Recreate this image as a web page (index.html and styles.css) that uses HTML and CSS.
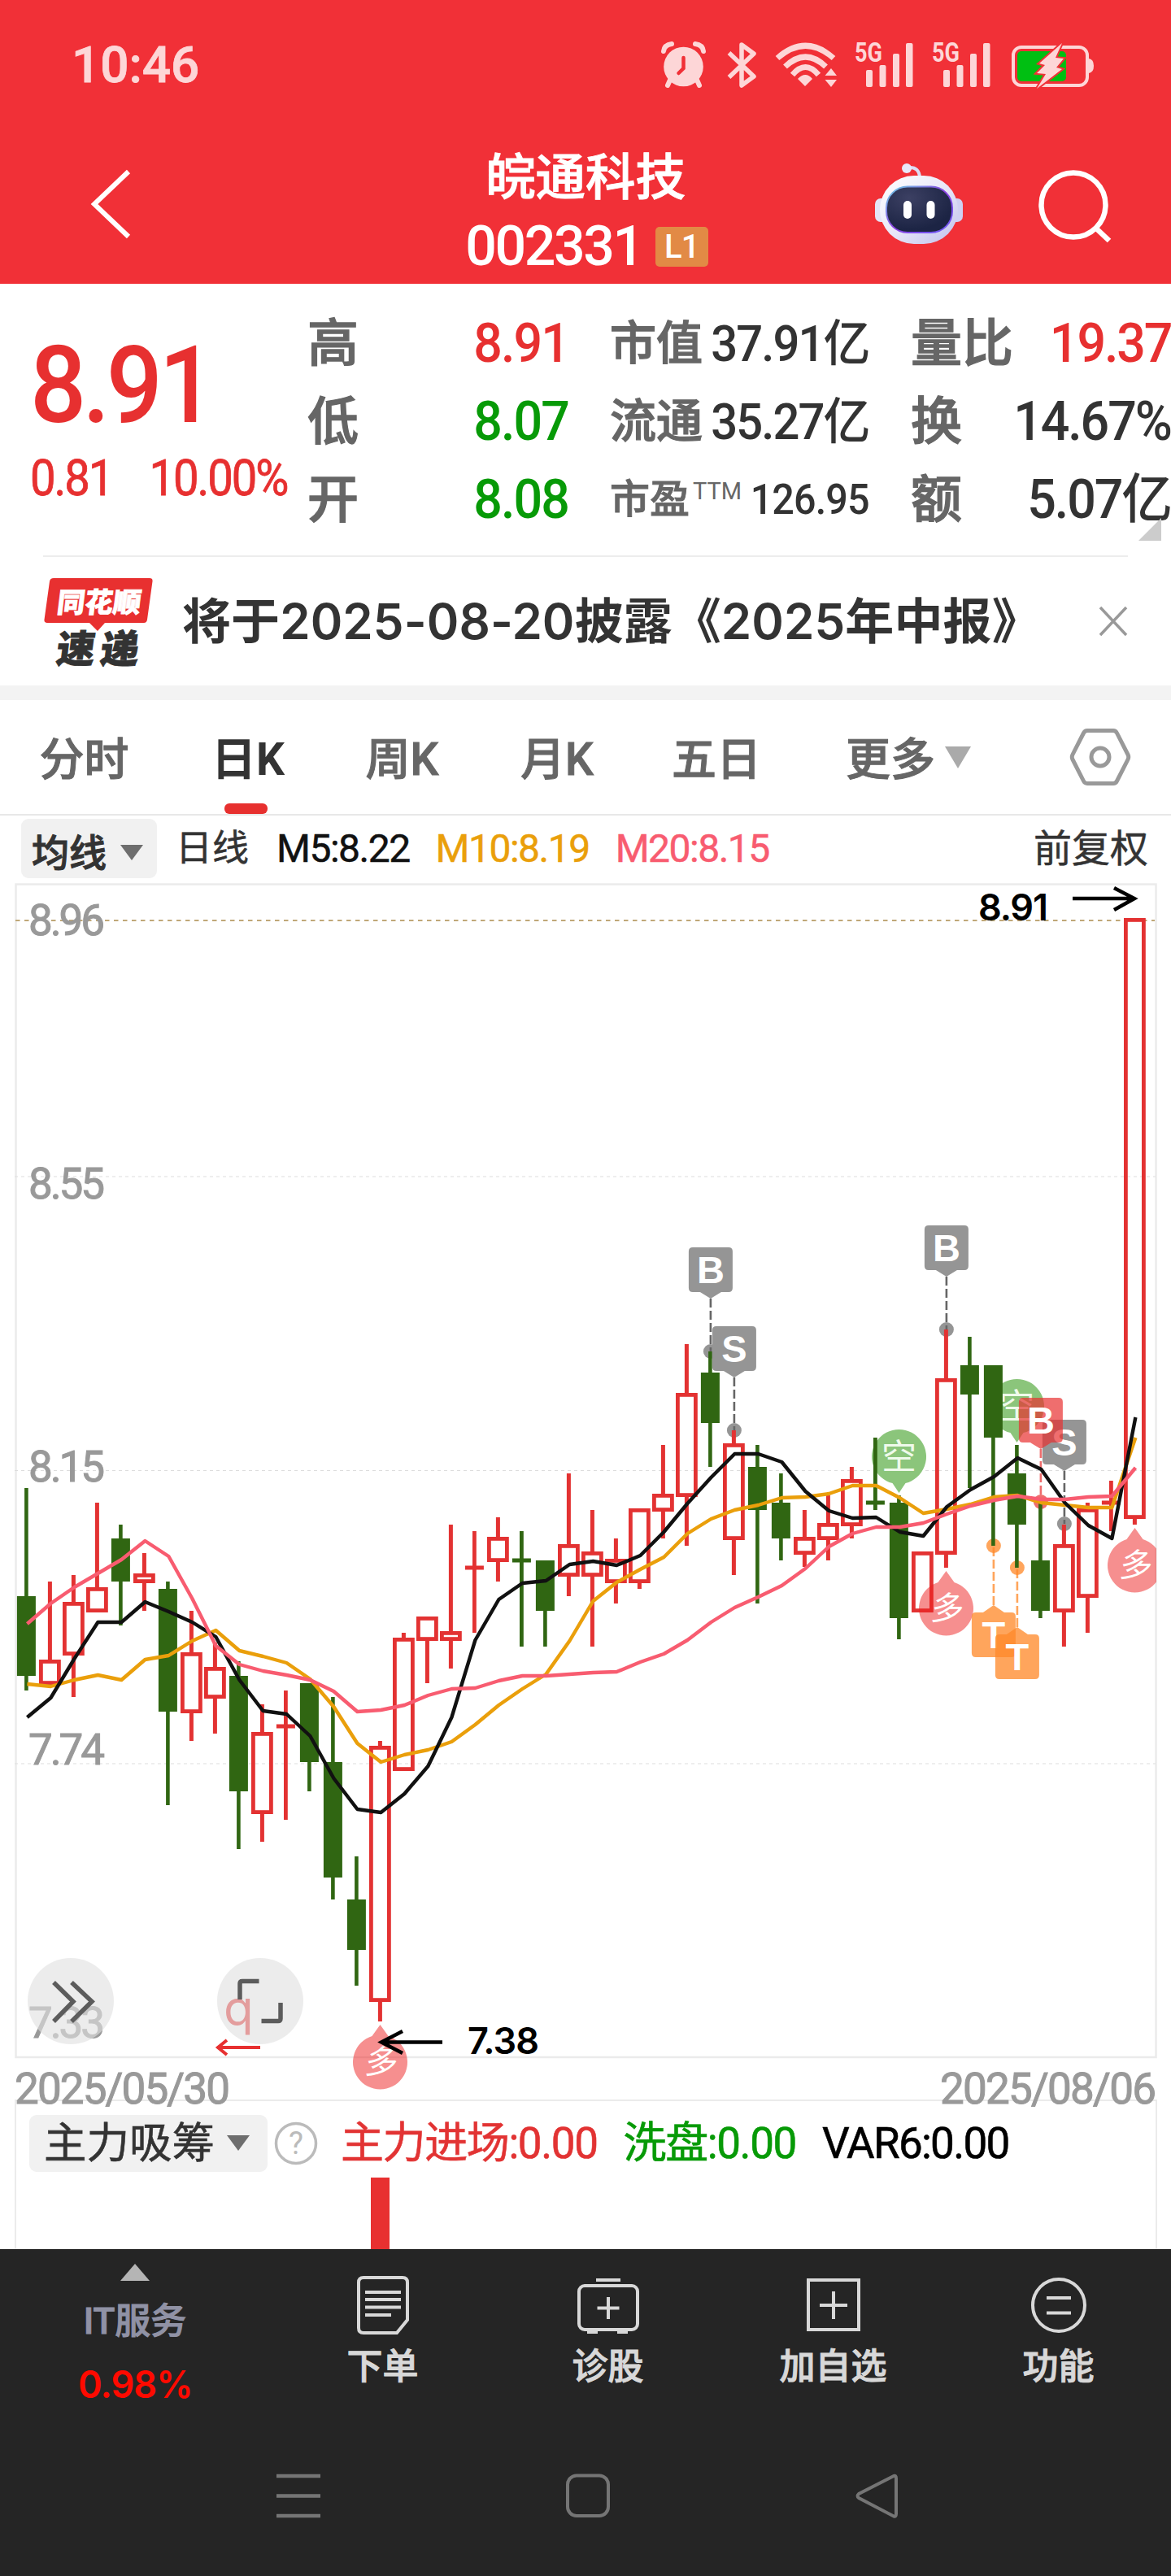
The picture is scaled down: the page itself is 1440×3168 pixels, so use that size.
FILE: index.html
```html
<!DOCTYPE html>
<html lang="zh-CN">
<head>
<meta charset="utf-8">
<title>皖通科技 002331</title>
<link rel="stylesheet" href="styles.css">
</head>
<body>
<div class="phone">
  <header class="top">
    <div class="status">
      <span class="clock">10:46</span>
      <svg class="status-icons" width="560" height="80" viewBox="800 40 560 80">
        <g fill="none" stroke="#fdd6d7" stroke-linecap="round">
          <path d="M824 102l-4 9M855 102l4 9" transform="translate(0,-6)" stroke-width="6"/>
          <path d="M815 63q1-8 10-9M864 63q-1-8-10-9" stroke-width="6"/>
        </g>
        <circle cx="839.5" cy="82" r="24.3" fill="#fdd6d7"/>
        <path d="M839.5 71v13l-6 6" fill="none" stroke="#f13037" stroke-width="4.5" stroke-linecap="round"/>
        <path d="M895.500 65L926 94 911 105V55L926 66 895.500 95" fill="none" stroke="#fdd6d7" stroke-width="5.5" stroke-linejoin="round"/>
        <g fill="none" stroke="#fdd6d7" stroke-width="7">
          <path d="M955 71.500Q989.500 41 1024 71.500"/>
          <path d="M964.500 82Q989.500 58 1014.500 82"/>
          <path d="M973.500 92Q989.500 73 1005.500 92"/>
        </g>
        <path d="M980 97q9.500-10 18 0l-9 9zM1013.500 93l7.500-9 7 9zM1013.500 98h14.500l-7 9z" fill="#fdd6d7"/>
        <g fill="#fdd6d7">
          <text class="net" x="1050" y="76" textLength="34" lengthAdjust="spacingAndGlyphs">5G</text>
          <rect x="1064" y="86" width="8" height="21" rx="2"/><rect x="1080.500" y="80" width="8" height="27" rx="2"/>
          <rect x="1097" y="66" width="8" height="41" rx="2"/><rect x="1113" y="53" width="8.500" height="54" rx="2"/>
        </g>
        <g fill="#fdd6d7">
          <text class="net" x="1145" y="76" textLength="34" lengthAdjust="spacingAndGlyphs">5G</text>
          <rect x="1159" y="86" width="8" height="21" rx="2"/><rect x="1175.500" y="80" width="8" height="27" rx="2"/>
          <rect x="1192" y="66" width="8" height="41" rx="2"/><rect x="1208" y="53" width="8.500" height="54" rx="2"/>
        </g>
        <rect x="1245" y="58" width="91" height="47" rx="10" fill="none" stroke="#fdd6d7" stroke-width="4"/>
        <path d="M1338 72q6 1 6 9t-6 9z" fill="#fdd6d7"/>
        <rect x="1250" y="63" width="60" height="37" rx="5" fill="#00bf12"/>
        <path d="M1305 53L1277 78 1284 80 1274 90 1285 91 1274 109 1305 85 1298 83 1307 72 1297 71Z" fill="#fdd6d7" stroke="#f13037" stroke-width="4" paint-order="stroke"/>
      </svg>
    </div>
    <div class="titlebar">
      <svg class="back" width="60" height="90" viewBox="105 206 60 90"><path d="M158 211L116 251 158 291" fill="none" stroke="#fff" stroke-width="6"/></svg>
      <div class="stock">
        <h1>皖通科技</h1>
        <div class="code"><span>002331</span><b>L1</b></div>
      </div>
      <div class="actions">
        <svg width="114" height="104" viewBox="1073 198 114 104">
          <defs>
            <linearGradient id="shell" x1="0" y1="0" x2="1" y2="1"><stop offset="0" stop-color="#fff"/><stop offset=".5" stop-color="#e9e8f8"/><stop offset="1" stop-color="#bfc0ec"/></linearGradient>
            <linearGradient id="rim" x1="0" y1="0" x2="1" y2="1"><stop offset="0" stop-color="#6fd5e6"/><stop offset=".5" stop-color="#8a3fe0"/><stop offset="1" stop-color="#6a5cf5"/></linearGradient>
            <radialGradient id="visor" cx=".35" cy=".25" r=".7"><stop offset="0" stop-color="#3c4063"/><stop offset="1" stop-color="#1c2444"/></radialGradient>
          </defs>
          <path d="M1117 206q13-1 14 12" fill="none" stroke="#dcdcf4" stroke-width="4"/>
          <circle cx="1115" cy="207" r="6" fill="#e8e8fa"/>
          <rect x="1076" y="244" width="16" height="29" rx="7" fill="#e4e4f7"/><rect x="1168" y="244" width="16" height="29" rx="7" fill="#cfd0f2"/>
          <rect x="1082" y="216" width="96" height="84" rx="42" fill="url(#shell)"/>
          <rect x="1090" y="229.500" width="81" height="56.500" rx="26" fill="url(#visor)" stroke="url(#rim)" stroke-width="2"/>
          <rect x="1111" y="247" width="10" height="22" rx="5" fill="#fff"/><rect x="1139.500" y="247" width="10" height="22" rx="5" fill="#fff"/>
        </svg>
        <svg width="96" height="96" viewBox="1274 206 96 96"><g fill="none" stroke="#fff" stroke-width="6.500"><circle cx="1320" cy="252" r="39.500"/><path d="M1347 280l17 16"/></g></svg>
      </div>
    </div>
  </header>

  <section class="quote">
    <div class="last">
      <div class="price">8.91</div>
      <div class="change"><span>0.81</span><span>10.00%</span></div>
    </div>
    <dl class="stats">
      <div class="c1"><dt>高</dt><dd class="up">8.91</dd></div>
      <div class="c2"><dt>市值</dt><dd>37.91亿</dd></div>
      <div class="c3"><dt>量比</dt><dd class="up">19.37</dd></div>
      <div class="c1"><dt>低</dt><dd class="down">8.07</dd></div>
      <div class="c2"><dt>流通</dt><dd>35.27亿</dd></div>
      <div class="c3"><dt>换</dt><dd>14.67%</dd></div>
      <div class="c1"><dt>开</dt><dd class="down">8.08</dd></div>
      <div class="c2 pe"><dt>市盈<sup>TTM</sup></dt><dd>126.95</dd></div>
      <div class="c3"><dt>额</dt><dd>5.07亿</dd></div>
    </dl>
    <i class="corner"></i>
  </section>

  <section class="news">
    <svg width="140" height="112" viewBox="50 706 140 112">
      <path d="M66 709H184q4 0 3.500 4L181 760q-.6 4-4 4H129l-9 10-10-10H58q-4 0-3.500-4L61 713q.6-4 5-4z" fill="#e83030"/>
      <text class="brand" transform="translate(69,751) skewX(-7)" textLength="103" lengthAdjust="spacingAndGlyphs">同花顺</text>
      <text class="express" transform="translate(68,813) skewX(-7)" textLength="101">速递</text>
    </svg>
    <p>将于2025-08-20披露《2025年中报》</p>
    <svg class="close" width="36" height="38" viewBox="0 0 36 38"><path d="M2 2l32 34M34 2L2 36" stroke="#999" stroke-width="3.500"/></svg>
  </section>

  <nav class="tabs">
    <a>分时</a><a class="on">日K</a><a>周K</a><a>月K</a><a>五日</a><a class="more">更多<i></i></a>
    <svg width="76" height="72" viewBox="0 0 76 72"><g fill="none" stroke="#999" stroke-width="5"><path d="M22 3.500H54q3 0 4.500 3L72 33q1.500 3 0 6L58.500 65.500q-1.500 3-4.500 3H22q-3 0-4.500-3L4 39q-1.500-3 0-6L17.500 6.500q1.500-3 4.500-3z"/><circle cx="38" cy="36" r="11"/></g></svg>
  </nav>

  <div class="ma">
    <button>均线<i></i></button>
    <span class="period">日线</span>
    <span class="m5">M5:8.22</span><span class="m10">M10:8.19</span><span class="m20">M20:8.15</span>
    <span class="adj">前复权</span>
  </div>

  <svg class="kline" width="1440" height="1498" viewBox="0 1084 1440 1498">
    <defs>
      <clipPath id="plot"><rect x="0" y="1084" width="1422" height="1600"/></clipPath>
      <g id="flag"><path d="M-22-27H22q5 0 5 5V23q0 5-5 5H13L0 36-13 28H-22q-5 0-5-5V-22q0-5 5-5z"/></g>
      <g id="flagUp"><path d="M-22-27H-13L0-36 13-27H22q5 0 5 5V23q0 5-5 5H-22q-5 0-5-5V-22q0-5 5-5z"/></g>
      <path id="pinDown" d="M0 45L-8 33A33.500 33.500 0 1 1 8 33Z"/>
      <path id="pinUp" d="M0-46L-10-32A33.500 33.500 0 1 0 10-32Z"/>
    </defs>
    <g class="frame"><rect x="19.500" y="1087.500" width="1402" height="1442.500"/></g>
    <g class="grid"><path d="M18 1447H1421M18 1808.500H1421M18 2169H1421"/></g>
    <path d="M19 1132H1420" stroke="#c0a878" stroke-width="2" stroke-dasharray="5.500 5.500"/>
    <g class="axis">
      <text x="35" y="1150" textLength="94">8.96</text><text x="35" y="1474" textLength="94">8.55</text>
      <text x="35" y="1822" textLength="94">8.15</text><text x="35" y="2170" textLength="94">7.74</text>
      <text x="35" y="2506" textLength="94">7.33</text>
      <text x="18" y="2587" textLength="265">2025/05/30</text><text x="1156" y="2587" textLength="266">2025/08/06</text>
    </g>
    <g class="pins-down">
      <use href="#pinDown" x="1105.500" y="1791"/><text x="1105.500" y="1807">空</text>
      <use href="#pinDown" x="1250.500" y="1729"/><text x="1250.500" y="1745">空</text>
    </g>
    <g id="stems"></g>
    <g id="candles"></g>
    <g id="averages"></g>
    <g class="pins-up" clip-path="url(#plot)">
      <use href="#pinUp" x="467.500" y="2536"/><text transform="translate(467.500,2550) skewX(-8)">多</text>
      <use href="#pinUp" x="1163.500" y="1978"/><text transform="translate(1163.500,1992) skewX(-8)">多</text>
      <use href="#pinUp" x="1395.500" y="1925"/><text transform="translate(1395.500,1939) skewX(-8)">多</text>
    </g>
    <g id="flags"></g>
    <g fill="none" stroke="#000" stroke-width="4.500">
      <path d="M1319 1105H1394M1370 1092L1395 1105 1370 1119"/>
      <path d="M544 2511.500H470M495 2498L469 2511.500 495 2525"/>
    </g>
    <g class="extreme"><text x="1203" y="1132" textLength="86">8.91</text><text x="575" y="2526" textLength="88">7.38</text></g>
    <text class="right-mark" x="275" y="2491">q</text>
    <path d="M320 2518H269M279 2509L268 2518 279 2527" fill="none" stroke="#e73030" stroke-width="4"/>
    <g fill="#e0e0e0" fill-opacity=".62"><circle cx="87" cy="2461" r="53"/><circle cx="320" cy="2461" r="53"/></g>
    <g fill="none" stroke="#5c5c5c" stroke-width="5.5">
      <path d="M66 2438L90 2461.500 66 2486M88 2438L113 2461.500 88 2486"/>
      <path d="M318.500 2436.500H298q-3 0-3 3V2459M321.500 2485.500H342q3 0 3-3V2463"/>
    </g>
  </svg>

  <section class="indicator">
    <div class="legend">
      <button>主力吸筹<i></i></button>
      <svg width="54" height="54" viewBox="0 0 54 54"><circle cx="27" cy="27" r="24.500" fill="none" stroke="#bbb" stroke-width="3.500"/><text x="27" y="40" text-anchor="middle">?</text></svg>
      <span class="v1">主力进场:0.00</span><span class="v2">洗盘:0.00</span><span class="v3">VAR6:0.00</span>
    </div>
    <div class="bar"></div>
  </section>

  <footer class="toolbar">
    <div class="sector"><i></i><span>IT服务</span><b>0.98%</b></div>
    <div><svg width="80" height="80" viewBox="0 0 80 80"><g fill="none" stroke="#d8d8d8" stroke-width="4"><path d="M16 6H64q6 0 6 6V58L57 74H16q-6 0-6-6V12q0-6 6-6z"/><path d="M18 24H62M18 33H62M18 42.500H62M18 52H50"/></g></svg><span>下单</span></div>
    <div><svg width="80" height="80" viewBox="0 0 80 80"><g fill="none" stroke="#d8d8d8" stroke-width="4"><rect x="4" y="16" width="72" height="54" rx="7"/><path d="M25 9H55M40 30V57M26.500 43.500H53.500M14 73H27M51 73H64"/></g></svg><span>诊股</span></div>
    <div><svg width="80" height="80" viewBox="0 0 80 80"><g fill="none" stroke="#d8d8d8" stroke-width="4"><rect x="9" y="9" width="62" height="61"/><path d="M40 23V57M23 40H57"/></g></svg><span>加自选</span></div>
    <div><svg width="80" height="80" viewBox="0 0 80 80"><g fill="none" stroke="#d8d8d8" stroke-width="4"><circle cx="40" cy="40" r="32"/><path d="M25 31H55M25 49.500H55"/></g></svg><span>功能</span></div>
  </footer>
  <div class="sysnav">
    <svg width="56" height="60" viewBox="0 0 56 60"><path d="M1 6H55M1 30.500H55M1 55H55" stroke="#757575" stroke-width="4.500"/></svg>
    <svg width="56" height="60" viewBox="0 0 56 60"><rect x="3" y="5.500" width="50" height="49.500" rx="11" fill="none" stroke="#757575" stroke-width="4"/></svg>
    <svg width="56" height="60" viewBox="0 0 56 60"><path d="M48 6L5 28q-3 2.500 0 5L48 55.500q3 1 3-3V9q0-4-3-3z" fill="none" stroke="#757575" stroke-width="4"/></svg>
  </div>
</div>
<script src="chart.js"></script>
</body>
</html>
```
FILE: styles.css
```css
* { box-sizing: border-box; margin: 0; padding: 0; }
body { background: #fff; }
.phone {
  width: 1440px; height: 3168px; display: flex; flex-direction: column; overflow: hidden;
  font-family: Roboto, "Noto Sans CJK SC", sans-serif; font-weight: 500; color: #333; background: #fff;
}
svg { display: block; flex: none; }
i { font-style: normal; }
button { border: 0; font: inherit; color: inherit; }

.top { height: 349px; background: #f13037; color: #fff; flex: none; }
.status { height: 160px; padding: 40px 79px 0 88px; display: flex; justify-content: space-between; }
.clock { font-size: 62px; line-height: 80px; color: #fdd6d7; -webkit-text-stroke: .8px; }
.net { font: 700 33px Roboto, sans-serif; }
.titlebar { height: 189px; display: grid; grid-template-columns: 480px 480px 480px; }
.back { margin: 46px 0 0 105px; }
.stock { display: flex; flex-direction: column; align-items: center; padding-top: 21px; }
.stock h1 { font-size: 61.5px; line-height: 76px; font-weight: 500; -webkit-text-stroke: 1px; }
.code { display: flex; align-items: center; gap: 16px; height: 92px; font-size: 68px; letter-spacing: -2.4px; padding-left: 3px; }
.code b { width: 65px; height: 49px; border-radius: 5px; background: #e28a45; font: 500 40px/49px Roboto, sans-serif; text-align: center; letter-spacing: -1px; }
.actions { display: flex; padding: 38px 0 0 113px; gap: 87px; }
.actions svg + svg { margin-top: 8px; }

.quote { height: 334px; flex: none; display: flex; position: relative; }
.last { width: 378px; padding-left: 37px; color: #e73030; }
.price { font-size: 131px; line-height: 160px; margin-top: 45px; letter-spacing: -5px; transform: scaleX(.93); transform-origin: 0 0; }
.change { display: flex; gap: 49px; font-size: 61px; line-height: 70px; margin-top: -1px; letter-spacing: -2.2px; font-weight: 400; white-space: nowrap; -webkit-text-stroke: .8px; transform: scaleX(.92); transform-origin: 0 0; }
.stats { display: grid; grid-template-columns: 372px 370px 320px; grid-auto-rows: 96px; padding-top: 26px; line-height: 96px; }
.stats > div { display: flex; justify-content: space-between; white-space: nowrap; }
.stats dt { color: #666; -webkit-text-stroke: 1.3px; }
.stats dd { transform: scaleX(.95); transform-origin: 100% 0; }
.c1 { padding-right: 51px; font-size: 66px; letter-spacing: -2px; }
.c2 { padding-right: 51px; font-size: 61px; letter-spacing: -2px; }
.c3 { font-size: 66px; letter-spacing: -2.2px; }
.c1 dt, .c3 dt { font-size: 63px; letter-spacing: 0; }
.c2 dt { font-size: 57px; letter-spacing: 0; }
.pe { font-size: 51px; letter-spacing: -.9px; }
.stats .pe dt { font-size: 49px; -webkit-text-stroke: .9px; }
.pe sup { font-size: 29px; line-height: 0; vertical-align: 17px; margin-left: 4px; letter-spacing: 0; font-weight: 400; -webkit-text-stroke: 0; }
.up { color: #e73030; }
.down { color: #079a07; }
.corner { position: absolute; right: 12px; bottom: 18px; border: 14px solid #ccc; border-left-color: transparent; border-top-color: transparent; }

.news { height: 160px; flex: none; margin: 0 53px; border-top: 2px solid #ededed; display: flex; align-items: center; }
.news svg:first-child { margin-left: -3px; margin-top: -1px; }
.brand { font: 900 34px "Noto Sans CJK SC", sans-serif; fill: #fff; stroke: #fff; stroke-width: .8px; }
.express { font: 900 47px "Noto Sans CJK SC", sans-serif; fill: #333; stroke: #333; stroke-width: 1px; }
.news p { font: 600 60px/80px Inter, "Noto Sans CJK SC", sans-serif; letter-spacing: .1px; margin-left: 34px; white-space: nowrap; color: #333; }
.news .close { margin-left: auto; }

.tabs { height: 160px; flex: none; border-top: 18px solid #f3f3f3; border-bottom: 2px solid #e8e8e8; display: grid; grid-template-columns: 207px 196px 183px 198px 194px 337px 80px; align-items: center; font-size: 55px; color: #666; -webkit-text-stroke: 1px; }
.tabs a { position: relative; text-align: center; line-height: 146px; height: 140px; }
.tabs .on { font-weight: 700; color: #333; -webkit-text-stroke: 0; }
.tabs .on::after { content: ""; position: absolute; left: 69px; bottom: 0; width: 53px; height: 13px; border-radius: 6px; background: #e7302f; }
.tabs .more { text-align: left; padding-left: 62px; }
.more i { display: inline-block; margin-left: 12px; vertical-align: 8px; border: 16px solid transparent; border-top: 27px solid #aaa; border-bottom: 0; }

.ma { height: 81px; flex: none; display: flex; align-items: center; padding: 0 28px 0 26px; font-size: 48px; line-height: 84px; white-space: nowrap; font-weight: 400; -webkit-text-stroke: .5px; }
.ma button { width: 167px; height: 73px; border-radius: 9px; background: #f1f1f1; font-size: 46px; font-weight: 500; padding-right: 4px; -webkit-text-stroke: 1px; }
button i { display: inline-block; border: 14px solid transparent; border-top: 19px solid #6e6e6e; border-bottom: 0; margin-left: 17px; vertical-align: 7px; }
.period { font-size: 45px; margin: 0 34px 0 23px; }
.m5, .m10, .m20 { letter-spacing: -1.5px; }
.m5 { color: #111; margin-right: 32px; }
.m10 { color: #ea9f0b; margin-right: 32px; }
.m20 { color: #f85c70; }
.adj { margin-left: auto; font-size: 47px; }

.kline { overflow: visible; position: relative; z-index: 1; }
.frame rect { fill: none; stroke: #ebebeb; stroke-width: 2.500px; }
.grid path { stroke: #ddd; stroke-width: 1.200px; stroke-dasharray: 4 4; }
.axis text { font: 400 53px Roboto, sans-serif; fill: #999; stroke: #999; stroke-width: 1px; }
.extreme text { font: 600 45px Inter, sans-serif; fill: #000; }
.right-mark { font: 400 60px Inter, sans-serif; fill: #e73030; }
.pins-down use { fill: #8bc57b; }
.pins-down text { font: 400 43px "Noto Sans CJK SC", sans-serif; fill: #effaeb; text-anchor: middle; }
.pins-up use { fill: #ee2020; fill-opacity: .5; }
.pins-up text { font: 400 40px "Noto Sans CJK SC", sans-serif; fill: #fff; text-anchor: middle; }
.flag-letter { font: 700 47px "Liberation Sans", sans-serif; fill: #fff; text-anchor: middle; }

.indicator { flex: none; height: 184px; margin: 0 17px 0 18px; border: solid #ebebeb; border-width: 2px 2px 0; padding: 17px 0 0 16px; }
.legend { display: flex; align-items: center; height: 70px; font-size: 53px; line-height: 70px; font-weight: 400; white-space: nowrap; -webkit-text-stroke: .6px; }
.legend button { width: 293px; height: 70px; border-radius: 9px; background: #f1f1f1; font-size: 52.5px; padding-right: 4px; line-height: 66px; }
.legend button i { margin-left: 15px; vertical-align: 9px; }
.legend svg { margin: 0 28px 0 8px; }
.legend text { font: 400 38px Roboto, sans-serif; fill: #bbb; }
.legend span { letter-spacing: -1.4px; }
.v1 { color: #e23333; margin-right: 32px; }
.v2 { color: #079a07; margin-right: 32px; }
.v3 { color: #000; }
.legend .v3 { letter-spacing: -1.7px; }
.bar { width: 23px; height: 88px; margin: 7px 0 0 420px; background: #e83030; }

.toolbar { height: 209px; flex: none; background: #252525; display: grid; grid-template-columns: 332px repeat(4, 277px); color: #d8d8d8; position: relative; z-index: 2; }
.toolbar > div { display: flex; flex-direction: column; align-items: center; padding-top: 29px; }
.toolbar span { font-size: 44px; line-height: 60px; margin-top: 6px; -webkit-text-stroke: 1px; }
.toolbar .sector { padding-top: 18px; }
.sector i { border: 18px solid transparent; border-bottom: 21px solid #b5b5b5; border-top: 0; }
.toolbar .sector span { color: #9092a5; margin-top: 20px; line-height: 60px; }
.sector b { font: 600 47px/60px Inter, sans-serif; color: #ff0a00; margin-top: 17px; letter-spacing: -1px; transform: scaleX(.96); }
.sysnav { height: 193px; flex: none; background: #252525; display: flex; padding: 64px 0 0 339px; gap: 300px; }
```
FILE: chart.js
```js
const NS = 'http://www.w3.org/2000/svg';
const STEP = 29, X0 = 32.4;
const cx = i => X0 + STEP * i;

// [rising, high, body top, body bottom, low]
const candles = [
  [0,1830,1963,2061,2079],[1,2041-96,2041,2072,2072],[1,1937,1970,2036,2087],[1,1848,1952,1983,1983],
  [0,1875,1892,1945,1999],[1,1910,1935,1947,1981],[0,1945,1954,2105,2220],[1,1981,2032,2107,2141],
  [1,2020,2050,2089,2132],[0,2043,2061,2203,2274],[1,2096,2130,2231,2265],[1,2079,2123,2123,2238],
  [0,2070,2070,2167,2203],[0,2087,2167,2309,2336],[0,2283,2336,2398,2442],[1,2141,2147,2462,2486],
  [1,2008,2014,2178,2178],[1,1988,1988,2018,2070],[1,1875,2006,2018,2052],[1,1883,1928,1928,2008],
  [1,1866,1890,1921,1945],[0,1883,1919,1919,2025],[0,1919,1919,1981,2025],[1,1812,1899,1939,1963],
  [1,1857,1908,1939,2025],[1,1892,1917,1947,1972],[1,1855,1855,1947,1954],[1,1777,1837,1859,1892],
  [1,1653,1713,1841,1901],[0,1662,1688,1750,1804],[1,1759,1775,1894,1937],[0,1777,1804,1857,1972],
  [0,1812,1848,1892,1919],[1,1857,1890,1912,1927],[1,1839,1873,1894,1919],[1,1804,1819,1877,1892],
  [0,1768,1848,1848,1857],[0,1839,1848,1990,2016],[1,1908,1908,1983,1983],[1,1635,1695,1912,1928],
  [0,1644,1679,1715,1830],[0,1679,1679,1768,1901],[0,1777,1812,1875,1928],[0,1848,1919,1981,1990],
  [1,1875,1899,1983,2025],[1,1848,1855,1965,2008],[1,1821,1848,1848,1883],[1,1129,1129,1868,1875]
];
const averages = {
  '#ea9f0b': [2071,2074,2066,2060,2066,2041,2036,2018,2005,2030,2037,2045,2065,2099,2144,2167,2158,2152,2142,2121,2097,2077,2059,2018,1969,1946,1930,1915,1886,1868,1857,1851,1842,1841,1837,1827,1827,1842,1861,1856,1850,1841,1839,1848,1851,1854,1854,1768],
  '#111': [2112,2088,2040,1995,1995,1970,1982,1995,2013,2066,2104,2108,2135,2187,2225,2229,2206,2172,2112,2017,1967,1947,1944,1924,1920,1925,1913,1884,1849,1817,1788,1788,1798,1834,1858,1867,1866,1884,1889,1853,1832,1816,1793,1807,1848,1876,1892,1743],
  '#f85c70': [1997,1972,1952,1935,1918,1895,1914,1966,2024,2047,2055,2060,2066,2080,2105,2103,2097,2085,2077,2076,2067,2061,2061,2059,2057,2056,2044,2034,2017,1995,1977,1964,1950,1929,1902,1886,1878,1878,1873,1862,1852,1845,1840,1844,1844,1841,1840,1805]
};
// trade flags: [candle, letter, anchor y, fill, dash colour, opacity]
const flags = [
  [29,'B',1662,'#959595','#666',1],[30,'S',1759,'#959595','#666',1],[39,'B',1635,'#959595','#666',1],
  [44,'S',1874,'#959595','#666',1],[43,'B',1847,'#e83030','#e83030',.7],
  [41,'T',1901,'#ff8929','#ff8929',.76],[42,'T',1928,'#ff8929','#ff8929',.76]
];

function add(parent, tag, attrs, text) {
  const el = document.createElementNS(NS, tag);
  for (const k in attrs) el.setAttribute(k, attrs[k]);
  if (text) el.textContent = text;
  parent.appendChild(el);
}

const layer = id => document.getElementById(id);

candles.forEach(([up, high, top, bottom, low], i) => {
  const g = layer('candles'), x = cx(i), color = up ? '#e33232' : '#306612';
  if (top === bottom) {
    add(g, 'path', { d: `M${x} ${high}V${low}M${x - 11.5} ${top}H${x + 11.5}`, stroke: color, 'stroke-width': 4.8 });
  } else if (up) {
    add(g, 'path', { d: `M${x} ${high}V${top + 1}M${x} ${bottom - 1}V${Math.max(low, bottom - 1)}`, stroke: color, 'stroke-width': 5 });
    add(g, 'rect', { x: x - 11, y: top + 2.4, width: 22, height: bottom - top - 4.8, fill: 'none', stroke: color, 'stroke-width': 4.8 });
  } else {
    add(g, 'path', { d: `M${x} ${high}V${low}`, stroke: color, 'stroke-width': 4.6 });
    add(g, 'rect', { x: x - 11.5, y: top, width: 23, height: bottom - top, fill: color });
  }
});

for (const color in averages) {
  const pts = averages[color].map((y, i) => `${cx(i) + 1},${y}`).join(' ');
  add(layer('averages'), 'polyline', { points: pts, fill: 'none', stroke: color, 'stroke-width': 4.4, 'stroke-linejoin': 'round' });
}

flags.forEach(([i, letter, y, fill, dash, opacity]) => {
  const x = cx(i) + .5, below = letter === 'T', boxY = below ? y + 109 : y - 101;
  const end = below ? y + 73 : y - 65;
  add(layer('stems'), 'circle', { cx: x, cy: y, r: 9, fill, 'fill-opacity': opacity });
  add(layer('stems'), 'path', { d: `M${x} ${end}V${y}`, stroke: dash, 'stroke-width': 2.6, 'stroke-dasharray': '11 4', opacity });
  const parent = layer('flags');
  add(parent, 'use', { href: below ? '#flagUp' : '#flag', x, y: boxY, fill, 'fill-opacity': opacity });
  add(parent, 'text', { x, y: boxY + 17, class: 'flag-letter' }, letter);
});
```
